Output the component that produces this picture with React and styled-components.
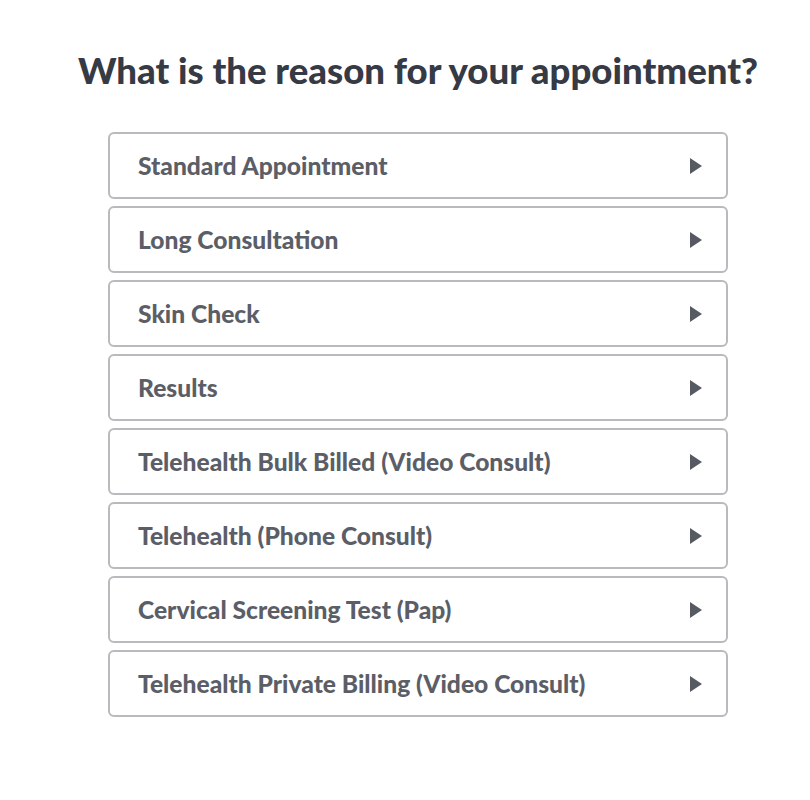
import styled, { createGlobalStyle } from 'styled-components';

const GlobalStyle = createGlobalStyle`
    body {
        margin: 0;
        background: #ffffff;
        font-family: Lato, "Open Sans", sans-serif;
    }
`;

const reasons = [
    'Standard Appointment',
    'Long Consultation',
    'Skin Check',
    'Results',
    'Telehealth Bulk Billed (Video Consult)',
    'Telehealth (Phone Consult)',
    'Cervical Screening Test (Pap)',
    'Telehealth Private Billing (Video Consult)'
];

function App() {
    return (
        <>
            <GlobalStyle />
            <Page>
                <Title>What is the reason for your appointment?</Title>
                <List>
                    {reasons.map((r) => (
                        <Option key={r} type="button">
                            <span>{r}</span>
                            <Arrow viewBox="0 0 12 16" aria-hidden="true">
                                <path d="M0 0 L12 8 L0 16 Z" />
                            </Arrow>
                        </Option>
                    ))}
                </List>
            </Page>
        </>
    );
}

export default App;

const Page = styled.div`
    width: 810px;
    height: 800px;
    box-sizing: border-box;
    padding: 48px 0 0 78px;
`;

const Title = styled.h1`
    margin: 0 0 40px 0;
    font-family: Lato, sans-serif;
    font-weight: 900;
    font-size: 36.6px;
    line-height: 44px;
    color: #353a45;
    white-space: nowrap;
`;

const List = styled.div`
    display: flex;
    flex-direction: column;
    gap: 7px;
    width: 620px;
    margin-left: 30px;
`;

const Option = styled.button`
    box-sizing: border-box;
    height: 67px;
    width: 100%;
    display: flex;
    align-items: center;
    justify-content: space-between;
    padding: 0 24px 0 28px;
    background: #fff;
    border: 2px solid #b9babd;
    border-radius: 6px;
    font-family: Lato, sans-serif;
    font-weight: 900;
    font-size: 24.6px;
    color: #5b5e67;
    text-align: left;
    cursor: pointer;
`;

const Arrow = styled.svg`
    width: 12px;
    height: 16px;
    fill: #565a63;
`;
